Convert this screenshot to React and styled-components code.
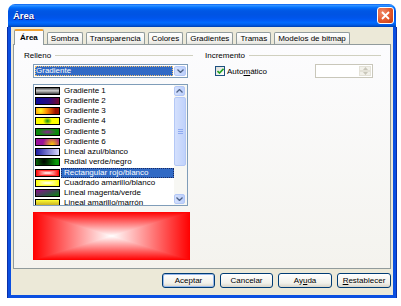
import React from "react";
import styled, { createGlobalStyle } from "styled-components";

const GlobalStyle = createGlobalStyle`
  body {
    margin: 0;
    background: #ffffff;
    font-family: "Liberation Sans", Arial, sans-serif;
  }
`;

const rect = (edge, center) =>
  `linear-gradient(to right, ${edge}, ${center}, ${edge}), linear-gradient(to bottom, ${edge}, ${center}, ${edge})`;

const gradients = [
  { name: "Gradiente 1", bg: "linear-gradient(to bottom, #4a4a4a, #d0d0d0 45%, #3a3a3a)" },
  { name: "Gradiente 2", bg: "linear-gradient(100deg, #0a0a9a, #2a0a80 55%, #7a0a2a)" },
  { name: "Gradiente 3", bg: "radial-gradient(circle at 20% 45%, #ffff20, #ff8a00 35%, #a01000 80%)" },
  { name: "Gradiente 4", bg: "radial-gradient(ellipse 22% 70% at 50% 50%, #10900f, #ffff00 90%)" },
  { name: "Gradiente 5", bg: "radial-gradient(ellipse 45% 60% at 50% 50%, #8a2090, #0a8a0a 90%)" },
  { name: "Gradiente 6", bg: "radial-gradient(circle at 70% 95%, #ffcc00, #9a109a 55%)" },
  { name: "Lineal azul/blanco", bg: "linear-gradient(to right, #1a1aa0, #d8d8ff)" },
  { name: "Radial verde/negro", bg: "radial-gradient(circle at 35% 40%, #000000, #0a9a0a 80%)" },
  { name: "Rectangular rojo/blanco", bg: rect("#ff0000", "#ffffff"), blend: true },
  { name: "Cuadrado amarillo/blanco", bg: rect("#ffff00", "#ffffff"), blend: true },
  { name: "Lineal magenta/verde", bg: "linear-gradient(160deg, #8a108a, #3a4a50 55%, #0a8a0a)" },
  { name: "Lineal amarillo/marrón", bg: "linear-gradient(to bottom, #ffff30, #c0a020)" },
];

const Window = styled.div`
  margin: 4px 0 0 8px;
  width: 388px;
  height: 294px;
  display: flex;
  flex-direction: column;
`;

const TitleBar = styled.div`
  height: 23px;
  box-sizing: border-box;
  border-radius: 7px 7px 0 0;
  padding: 0 2px 0 5px;
  display: flex;
  align-items: center;
  justify-content: space-between;
  background: linear-gradient(
    to bottom,
    #0058ee 0%,
    #3593ff 5%,
    #288eff 8%,
    #127dff 12%,
    #036ffc 16%,
    #0262ee 22%,
    #0057e5 30%,
    #0054e3 45%,
    #0055eb 60%,
    #005bf5 70%,
    #026afe 80%,
    #0062ef 88%,
    #0052d6 94%,
    #0040ab 100%
  );
`;

const Title = styled.span`
  color: #ffffff;
  font-weight: bold;
  font-size: 9.5px;
  text-shadow: 1px 1px #0a1883;
`;

const CloseButton = styled.div`
  width: 17px;
  height: 17px;
  box-sizing: border-box;
  border: 1px solid #ffffff;
  border-radius: 3px;
  background: radial-gradient(circle at 30% 30%, #f08a6a, #e2572c 55%, #c23b12);
  display: flex;
  align-items: center;
  justify-content: center;
`;

const DialogBody = styled.div`
  flex: 1;
  background: #ece9d8;
  border: 3px solid #0b4fe0;
  border-top: none;
  box-shadow: -1px 0 0 #0a2fa8, 1px 0 0 #0a2fa8, 0 1px 0 #0a2fa8;
  padding: 2px 2px 0 2px;
  display: flex;
  flex-direction: column;
`;

const TabRow = styled.div`
  height: 15px;
  display: flex;
  align-items: flex-end;
  gap: 3px;
  padding-left: 1px;
  position: relative;
  z-index: 1;
`;

const Tab = styled.div`
  height: ${(p) => (p.$active ? "16px" : "12px")};
  box-sizing: border-box;
  padding: 0 ${(p) => (p.$active ? "5px" : "3px")};
  margin-bottom: ${(p) => (p.$active ? "-1px" : "0")};
  font-size: 8px;
  line-height: ${(p) => (p.$active ? "13px" : "11px")};
  color: #000;
  border: 1px solid #919b9c;
  border-bottom: none;
  border-radius: 2px 2px 0 0;
  background: ${(p) =>
    p.$active ? "#fcfcfe" : "linear-gradient(to bottom, #ffffff, #f3f3ef 70%, #e4e3dc)"};
  border-top: ${(p) => (p.$active ? "2px solid #f0a030" : "1px solid #919b9c")};
  font-weight: ${(p) => (p.$active ? "bold" : "normal")};
`;

const Panel = styled.div`
  height: 225px;
  box-sizing: border-box;
  border: 1px solid #919b9c;
  background: linear-gradient(to bottom, #fcfcfe, #f4f3ee);
  padding: 5px 9px 0 10px;
  display: grid;
  grid-template-columns: 169px 176px;
  column-gap: 12px;
  align-content: start;
`;

const Column = styled.div`
  display: flex;
  flex-direction: column;
`;

const GroupHeader = styled.div`
  height: 10px;
  display: flex;
  align-items: center;
  gap: 4px;
  font-size: 8px;
  color: #000;
  &::after {
    content: "";
    flex: 1;
    height: 1px;
    background: #d0d0bf;
  }
`;

const Combo = styled.div`
  margin: 4px 0 0 9px;
  width: 155px;
  height: 14px;
  box-sizing: border-box;
  border: 1px solid #7f9db9;
  background: #ffffff;
  padding: 1px;
  display: flex;
  gap: 1px;
`;

const ComboValue = styled.div`
  flex: 1;
  background: #316ac5;
  color: #ffffff;
  font-size: 8px;
  line-height: 10px;
  padding-left: 1px;
  outline: 1px dotted #f0c070;
  outline-offset: -1px;
`;

const ArrowButton = styled.div`
  width: ${(p) => p.$w || 11}px;
  height: ${(p) => p.$h || 10}px;
  box-sizing: border-box;
  border: 1px solid #b4c8f6;
  border-radius: 2px;
  background: linear-gradient(to right, #d4e0fd, #bccffb);
  display: flex;
  align-items: center;
  justify-content: center;
`;

const ListBox = styled.div`
  margin: 6px 0 0 9px;
  width: 155px;
  height: 122px;
  box-sizing: border-box;
  border: 1px solid #7f9db9;
  background: #ffffff;
  display: flex;
  overflow: hidden;
`;

const Items = styled.div`
  flex: 1;
  padding-top: 0.5px;
`;

const Item = styled.div`
  height: 10.25px;
  display: flex;
  align-items: center;
  padding-left: 1px;
`;

const Swatch = styled.div`
  width: 25px;
  height: 8px;
  box-sizing: border-box;
  border: 1px solid #000;
  background: ${(p) => p.$bg};
  background-blend-mode: ${(p) => (p.$blend ? "darken" : "normal")};
  flex-shrink: 0;
`;

const ItemText = styled.div`
  flex: 1;
  height: 10px;
  margin-left: 1px;
  padding-left: 3px;
  font-size: 8px;
  line-height: 10px;
  white-space: nowrap;
  color: ${(p) => (p.$selected ? "#ffffff" : "#000000")};
  background: ${(p) => (p.$selected ? "#316ac5" : "transparent")};
  outline: ${(p) => (p.$selected ? "1px dotted #1a2a60" : "none")};
  outline-offset: -1px;
`;

const ScrollBar = styled.div`
  width: 12px;
  padding: 1px 1px 1px 0;
  display: flex;
  flex-direction: column;
  background: #f7f7f3;
`;

const Thumb = styled.div`
  margin-top: 1px;
  height: 69px;
  box-sizing: border-box;
  border: 1px solid #b4c8f6;
  border-radius: 2px;
  background: linear-gradient(to right, #d4e0fd, #c0d2fb);
  display: flex;
  flex-direction: column;
  align-items: center;
  justify-content: center;
  gap: 1px;
  & > span {
    width: 5px;
    height: 1px;
    background: #8faaf0;
  }
`;

const Track = styled.div`
  flex: 1;
`;

const Preview = styled.div`
  margin: 6px 0 0 9px;
  width: 157px;
  height: 48px;
  background: ${rect("#ff0000", "#ffffff")};
  background-blend-mode: darken;
`;

const CheckRow = styled.div`
  margin-top: 4px;
  height: 14px;
  display: flex;
  align-items: center;
  padding: 0 8px 0 10px;
`;

const CheckBox = styled.div`
  width: 10px;
  height: 10px;
  box-sizing: border-box;
  border: 1px solid #1c5180;
  background: linear-gradient(135deg, #dcdcd7, #ffffff);
  display: flex;
  align-items: center;
  justify-content: center;
`;

const CheckLabel = styled.span`
  margin-left: 2px;
  font-size: 8px;
  color: #000;
`;

const SpinField = styled.div`
  margin-left: auto;
  width: 58px;
  height: 14px;
  box-sizing: border-box;
  border: 1px solid #c9c7ba;
  background: #ffffff;
  display: flex;
  justify-content: flex-end;
  padding: 1px;
`;

const SpinButtons = styled.div`
  width: 12px;
  display: flex;
  flex-direction: column;
  & > div {
    flex: 1;
    background: #f2f1ea;
    border: 1px solid #e4e2d8;
    display: flex;
    align-items: center;
    justify-content: center;
  }
`;

const ButtonRow = styled.div`
  margin-top: 4px;
  height: 15px;
  display: flex;
  justify-content: flex-end;
  gap: 5px;
`;

const Button = styled.div`
  width: ${(p) => p.$w}px;
  box-sizing: border-box;
  border: 1px solid #003c74;
  border-radius: 3px;
  background: linear-gradient(to bottom, #ffffff, #f2f1ea 70%, #d8d4c8);
  box-shadow: ${(p) => (p.$default ? "inset 0 0 0 1px #98b8ea" : "none")};
  font-size: 8px;
  line-height: 13px;
  text-align: center;
  color: #000;
`;

const Chevron = ({ up, color = "#4d6185" }) => (
  <svg width="7" height="4" viewBox="0 0 7 4">
    <path
      d={up ? "M0.5 3.5 L3.5 0.5 L6.5 3.5" : "M0.5 0.5 L3.5 3.5 L6.5 0.5"}
      fill="none"
      stroke={color}
      strokeWidth="1.3"
    />
  </svg>
);

const TinyArrow = ({ up }) => (
  <svg width="5" height="3" viewBox="0 0 5 3">
    <path d={up ? "M0 3 L2.5 0 L5 3 Z" : "M0 0 L2.5 3 L5 0 Z"} fill="#c9c7ba" />
  </svg>
);

const tabs = ["Área", "Sombra", "Transparencia", "Colores", "Gradientes", "Tramas", "Modelos de bitmap"];

export default function App() {
  return (
    <>
      <GlobalStyle />
      <Window>
        <TitleBar>
          <Title>Área</Title>
          <CloseButton>
            <svg width="9" height="9" viewBox="0 0 9 9">
              <path d="M1 1 L8 8 M8 1 L1 8" stroke="#ffffff" strokeWidth="1.8" />
            </svg>
          </CloseButton>
        </TitleBar>
        <DialogBody>
          <TabRow>
            {tabs.map((t, i) => (
              <Tab key={t} $active={i === 0}>
                {t}
              </Tab>
            ))}
          </TabRow>
          <Panel>
            <Column>
              <GroupHeader>Relleno</GroupHeader>
              <Combo>
                <ComboValue>Gradiente</ComboValue>
                <ArrowButton $w={12} $h={10}>
                  <Chevron />
                </ArrowButton>
              </Combo>
              <ListBox>
                <Items>
                  {gradients.map((g, i) => (
                    <Item key={g.name}>
                      <Swatch $bg={g.bg} $blend={g.blend} />
                      <ItemText $selected={i === 8}>{g.name}</ItemText>
                    </Item>
                  ))}
                </Items>
                <ScrollBar>
                  <ArrowButton $w={11} $h={10}>
                    <Chevron up />
                  </ArrowButton>
                  <Thumb>
                    <span />
                    <span />
                    <span />
                  </Thumb>
                  <Track />
                  <ArrowButton $w={11} $h={10}>
                    <Chevron />
                  </ArrowButton>
                </ScrollBar>
              </ListBox>
              <Preview />
            </Column>
            <Column>
              <GroupHeader>Incremento</GroupHeader>
              <CheckRow>
                <CheckBox>
                  <svg width="7" height="6" viewBox="0 0 7 6">
                    <path d="M0.5 3 L2.5 5 L6.5 0.8" fill="none" stroke="#21a121" strokeWidth="1.6" />
                  </svg>
                </CheckBox>
                <CheckLabel>
                  Auto<u>m</u>ático
                </CheckLabel>
                <SpinField>
                  <SpinButtons>
                    <div>
                      <TinyArrow up />
                    </div>
                    <div>
                      <TinyArrow />
                    </div>
                  </SpinButtons>
                </SpinField>
              </CheckRow>
            </Column>
          </Panel>
          <ButtonRow>
            <Button $w={53} $default>
              Aceptar
            </Button>
            <Button $w={53}>Cancelar</Button>
            <Button $w={54}>
              Ay<u>u</u>da
            </Button>
            <Button $w={54}>
              <u>R</u>establecer
            </Button>
          </ButtonRow>
        </DialogBody>
      </Window>
    </>
  );
}
